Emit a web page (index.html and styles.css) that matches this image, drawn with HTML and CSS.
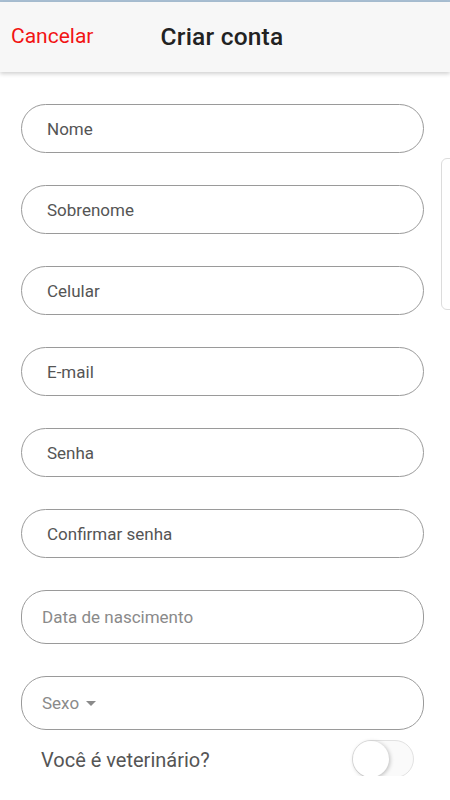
FILE: index.html
```html
<!DOCTYPE html>
<html lang="pt">
<head>
    <meta charset="UTF-8">
    <meta name="viewport" content="width=device-width, initial-scale=1.0">
    <title>Criar conta</title>
    <link rel="stylesheet" href="styles.css">
</head>
<body>

    <div class="top-line"></div>
    <div class="header">
        <a href="#" class="cancel">Cancelar</a>
        <h1 class="title">Criar conta</h1>
        <span></span>
    </div>

    <div class="content">
        <form class="signup" id="signupForm">
            <div class="field"><span class="placeholder">Nome</span></div>
            <div class="field"><span class="placeholder">Sobrenome</span></div>
            <div class="field"><span class="placeholder">Celular</span></div>
            <div class="field"><span class="placeholder">E-mail</span></div>
            <div class="field"><span class="placeholder">Senha</span></div>
            <div class="field"><span class="placeholder">Confirmar senha</span></div>
            <div class="field field-big"><span class="placeholder light">Data de nascimento</span></div>
            <div class="field field-big">
                <span class="placeholder light">Sexo</span>
                <svg class="caret" width="10" height="5" viewBox="0 0 10 5"><path d="M0 0h10L5 5z" fill="#8a8a8a"/></svg>
            </div>
            <div class="vet-row">
                <span class="vet-label">Você é veterinário?</span>
                <div class="switch"><div class="knob"></div></div>
            </div>
        </form>
        <div class="edge-panel"></div>
    </div>

</body>
</html>
```

FILE: styles.css
```css
body {
    font-family: Roboto, "Noto Sans", Arial, sans-serif;
    background-color: #fff;
    margin: 0;
    padding: 0;
    color: #555;
}
.top-line {
    height: 2px;
    background-color: #a9bfd3;
}
.header {
    position: relative;
    z-index: 2;
    height: 70px;
    background-color: #f7f7f7;
    box-shadow: 0 2px 4px rgba(0, 0, 0, 0.18);
    display: grid;
    grid-template-columns: 1fr auto 1fr;
    align-items: center;
}
.cancel {
    color: #f21414;
    text-decoration: none;
    font-size: 21px;
    padding-left: 11px;
    margin-top: -2px;
}
.title {
    margin: 0;
    font-size: 24.5px;
    font-weight: 500;
    color: #222;
    letter-spacing: 0.2px;
    margin-top: -1px;
    margin-left: -6px;
}
.content {
    position: relative;
    height: 704px;
    overflow: hidden;
}
.signup {
    display: flex;
    flex-direction: column;
    gap: 32px;
    padding: 32px 26px 0 21px;
}
.field {
    height: 47px;
    border: 1px solid #9a9a9a;
    border-radius: 25px;
    display: flex;
    align-items: center;
    padding-left: 25px;
}
.field-big {
    height: 52px;
    padding-left: 20px;
}
.placeholder {
    font-size: 17px;
    color: #555;
}
.placeholder.light {
    color: #8a8a8a;
}
.caret {
    margin-left: 7px;
    margin-top: 1px;
}
.vet-row {
    display: flex;
    align-items: center;
    justify-content: space-between;
    margin-top: -22px;
    padding: 0 10px 0 20px;
}
.vet-label {
    font-size: 20px;
    color: #555;
    margin-top: 2px;
}
.switch {
    width: 60px;
    height: 36px;
    border: 1px solid #e2e2e2;
    border-radius: 19px;
    background-color: #fafafa;
    position: relative;
}
.knob {
    position: absolute;
    left: 0;
    top: 0;
    width: 36px;
    height: 36px;
    border-radius: 50%;
    background-color: #fff;
    box-shadow: 1px 1px 4px rgba(0, 0, 0, 0.25);
}
.edge-panel {
    position: absolute;
    left: 441px;
    top: 86px;
    width: 20px;
    height: 150px;
    border: 1px solid #dcdcdc;
    border-radius: 6px;
}
```
